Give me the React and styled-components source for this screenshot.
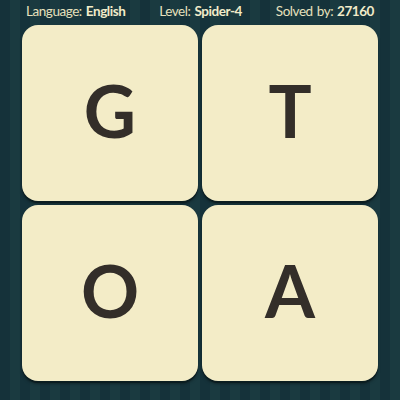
import React from "react";
import styled, { createGlobalStyle } from "styled-components";

const GlobalStyle = createGlobalStyle`
  html, body {
    margin: 0;
    padding: 0;
  }
  body {
    font-family: Lato, "Noto Sans", sans-serif;
  }
`;

const tiles = ["G", "T", "O", "A"];

export default function App() {
  return (
    <>
      <GlobalStyle />
      <Screen>
        <Header>
          <Info>
            Language: <strong>English</strong>
          </Info>
          <Info>
            Level: <strong>Spider-4</strong>
          </Info>
          <Info>
            Solved by: <strong>27160</strong>
          </Info>
        </Header>
        <Board>
          {tiles.map((t, i) => (
            <Tile key={i}>{t}</Tile>
          ))}
        </Board>
      </Screen>
    </>
  );
}

const Screen = styled.div`
  width: 400px;
  height: 400px;
  overflow: hidden;
  background-color: #173439;
  background-image: repeating-linear-gradient(
    90deg,
    #15323a 0px,
    #15323a 10px,
    #1a3a40 10px,
    #1a3a40 20px
  );
  display: flex;
  flex-direction: column;
  align-items: center;
`;

const Header = styled.div`
  width: 348px;
  height: 25px;
  display: flex;
  align-items: center;
  justify-content: space-between;
  padding-bottom: 3px;
  box-sizing: border-box;
`;

const Info = styled.span`
  color: #e6e0bd;
  font-size: 13.5px;
  letter-spacing: -0.45px;
  word-spacing: 1px;
  strong {
    font-weight: 700;
    color: #f1ebc9;
  }
`;

const Board = styled.div`
  display: grid;
  grid-template-columns: 176px 176px;
  grid-auto-rows: 176px;
  gap: 4px;
`;

const Tile = styled.div`
  background: #f3ecc7;
  border-radius: 16px;
  box-shadow: 0 2px 0 #0b1d20, 0 3px 3px rgba(0, 0, 0, 0.35);
  display: flex;
  align-items: center;
  justify-content: center;
  font-family: Lato, "Noto Sans", sans-serif;
  font-weight: 700;
  font-size: 72px;
  color: #332e29;
  padding-bottom: 6px;
  box-sizing: border-box;
`;
